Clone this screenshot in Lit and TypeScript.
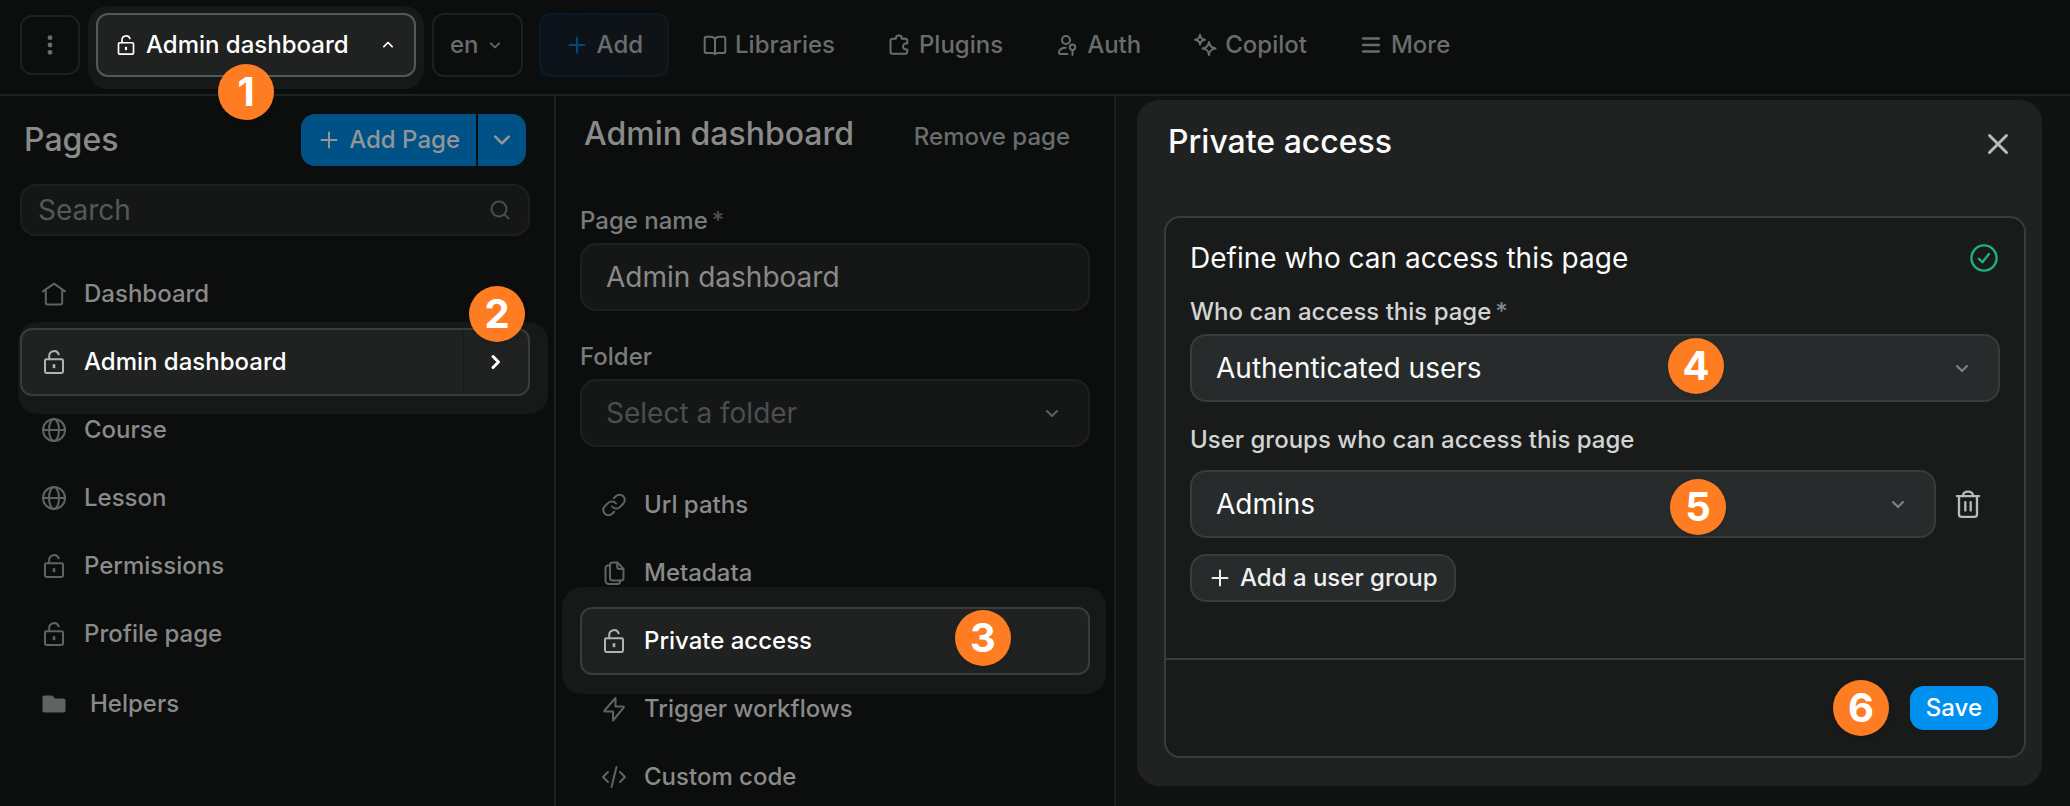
import { LitElement, html, css, svg, nothing, type TemplateResult } from "lit";
import { customElement, property, state } from "lit/decorators.js";
import { classMap } from "lit/directives/class-map.js";

const shapes: Record<string, TemplateResult> = {
  kebab: svg`<g fill="currentColor" stroke="none"><circle cx="12" cy="3.200" r="2.900"/><circle cx="12" cy="12" r="2.900"/><circle cx="12" cy="20.800" r="2.900"/></g>`,
  lock: svg`<rect x="3" y="9.3" width="18" height="13.7" rx="1.4"/><path d="M7.2 9.3V6a4.9 4.9 0 0 1 9.5-1.7"/><path d="M12 14.2v4" stroke-width="2.6" stroke-linecap="butt"/>`,
  house: svg`<path d="M1 9.4 12 1.6l11 7.8"/><path d="M3.8 8v12.4a2 2 0 0 0 2 2h12.4a2 2 0 0 0 2-2V8"/>`,
  globe: svg`<circle cx="12" cy="12" r="11"/><ellipse cx="12" cy="12" rx="5" ry="11"/><path d="M1 12h22"/>`,
  folder: svg`<path fill="currentColor" stroke="none" d="M.5 5.500a2 2 0 0 1 2-2h7a2 2 0 0 1 1.5.7L13 6.500h8.500a2 2 0 0 1 2 2v10a2 2 0 0 1-2 2h-19a2 2 0 0 1-2-2z"/>`,
  plus: svg`<path d="M12 4.500v15M4.500 12h15"/>`,
  down: svg`<path d="m7 10 5 5 5-5"/>`,
  up: svg`<path d="m7 14 5-5 5 5"/>`,
  downBig: svg`<path d="m4 8 8 8 8-8" stroke-width="3.200"/>`,
  right: svg`<path d="m9 6.500 5.500 5.500L9 17.500" stroke-width="3"/>`,
  search: svg`<circle cx="11" cy="11" r="7.500"/><path d="m16.500 16.500 4 4"/>`,
  book: svg`<path d="M12 5.500C10.800 4.300 9.500 3.700 8 3.700H3.500A1.800 1.800 0 0 0 1.700 5.500v12.700A1.800 1.800 0 0 0 3.500 20h5.700c1.200 0 2.100.5 2.800 1.300.7-.8 1.600-1.300 2.800-1.300h5.700a1.800 1.800 0 0 0 1.800-1.800V5.500a1.800 1.800 0 0 0-1.800-1.800H16c-1.500 0-2.800.6-4 1.800zM12 5.500v15.800"/>`,
  puzzle: svg`<path d="M5.500 5.700h3.300C8.800 3.800 10 2.500 11.800 2.500s3 1.300 3 3.200h3.500a2 2 0 0 1 2 2v2.700c-2.500-.3-4.300 1-4.300 3.100s1.800 3.300 4.300 3v2.300a2 2 0 0 1-2 2H5.500a2 2 0 0 1-2-2V7.700a2 2 0 0 1 2-2z"/>`,
  auth: svg`<circle cx="11" cy="7" r="4"/><path d="M12.500 21H5.300c-1 0-1.600-.8-1.400-1.800.6-2.700 3-4.400 6.800-4.400"/><circle cx="17.500" cy="14.300" r="2.700"/><path d="M17.500 17v5"/>`,
  sparkles: svg`<path d="M7 1.700c.4 3.400 1.700 4.700 5 5-3.300.3-4.600 1.600-5 5-.4-3.400-1.700-4.700-5-5 3.300-.3 4.600-1.600 5-5z"/><path d="M16 9c.6 4.200 2.200 5.900 6.500 6.500-4.300.6-5.900 2.200-6.500 6.500-.6-4.300-2.200-5.900-6.500-6.500C13.800 14.900 15.400 13.200 16 9z"/>`,
  menu: svg`<path d="M4 5.500h16M4 12h16M4 18.500h16" stroke-width="2.300"/>`,
  link: svg`<path d="M10 13.500a5.200 5.200 0 0 0 7.800.6l3.400-3.400a5.200 5.200 0 0 0-7.400-7.400l-2 2"/><path d="M14 10.500a5.200 5.200 0 0 0-7.800-.6l-3.400 3.400a5.200 5.200 0 0 0 7.400 7.400l2-2"/>`,
  docs: svg`<path d="M10.500 1.500h5L21.500 8v9a2.500 2.500 0 0 1-2.500 2.500h-8.500A2.500 2.500 0 0 1 8 17V4a2.500 2.500 0 0 1 2.500-2.500z"/><path d="M15.200 1.500V6a2 2 0 0 0 2 2h4"/><path d="M7.500 4.500H6A2.500 2.500 0 0 0 3.500 7v12.500A3.500 3.500 0 0 0 7 23h8.500a2.500 2.500 0 0 0 2.500-2.500v-1"/>`,
  bolt: svg`<path d="M13.500 1 2.500 13.500c-.3.400 0 1 .5 1h8L11 23.500 21.700 10.700c.4-.5.1-1.200-.5-1.200h-7.700z"/>`,
  code: svg`<path d="M6 7 1 12l5 5M18 7l5 5-5 5M14.500 2l-5 20"/>`,
  close: svg`<path d="m3.500 3.500 17 17M20.500 3.500l-17 17" stroke-width="3"/>`,
  check: svg`<circle cx="12" cy="12" r="10.800"/><path d="m7.600 12.600 3 3 5.600-7"/>`,
  trash: svg`<path d="M2.500 5.200h19M7.500 5c.4-2.300 2.200-3.600 4.500-3.600S16.100 2.700 16.500 5M4.300 5.500v15.200a2.300 2.300 0 0 0 2.300 2.300h10.800a2.300 2.300 0 0 0 2.300-2.300V5.500M9.700 10.500v7M14.300 10.500v7"/>`,
};

@customElement("ui-icon")
class UiIcon extends LitElement {
  static styles = css`
    :host { display: block; flex: none; width: 24px; height: 24px; }
    svg { display: block; width: 100%; height: 100%; overflow: visible; }
  `;
  @property() name = "";
  render() {
    return html`<svg viewBox="0 0 24 24" fill="none" stroke="currentColor" stroke-width="2"
      stroke-linecap="round" stroke-linejoin="round" aria-hidden="true">${shapes[this.name]}</svg>`;
  }
}

@customElement("step-badge")
class StepBadge extends LitElement {
  static styles = css`
    :host {
      position: absolute; z-index: 5; width: 56px; height: 56px; border-radius: 50%;
      display: grid; place-items: center; pointer-events: none;
      background: #ff7d22; color: #fff; font: 700 40px/56px Inter, sans-serif;
      box-shadow: 0 2px 4px rgba(0, 0, 0, 0.15);
    }
  `;
  @property({ type: Number }) step = 0;
  render() { return html`${this.step}`; }
}

interface Entry { icon: string; label: string; }

const tools: Entry[] = [
  { icon: "book", label: "Libraries" },
  { icon: "puzzle", label: "Plugins" },
  { icon: "auth", label: "Auth" },
  { icon: "sparkles", label: "Copilot" },
  { icon: "menu", label: "More" },
];
const pages: Entry[] = [
  { icon: "house", label: "Dashboard" },
  { icon: "lock", label: "Admin dashboard" },
  { icon: "globe", label: "Course" },
  { icon: "globe", label: "Lesson" },
  { icon: "lock", label: "Permissions" },
  { icon: "lock", label: "Profile page" },
];
const settings: Entry[] = [
  { icon: "link", label: "Url paths" },
  { icon: "docs", label: "Metadata" },
  { icon: "lock", label: "Private access" },
  { icon: "bolt", label: "Trigger workflows" },
  { icon: "code", label: "Custom code" },
];

@customElement("app-root")
class AppRoot extends LitElement {
  static styles = css`
    :host {
      display: flex; flex-direction: column; height: 100vh; overflow: hidden;
      background: #0c0e0d; color: #8a8a8a;
      font: 500 24px/32px Inter, sans-serif;
      --line: #1e2020;
    }
    * { box-sizing: border-box; }
    h1, h2, h3 { margin: 0; font-weight: 500; font-size: 32px; line-height: 40px; }
    button, input, select { font: inherit; color: inherit; margin: 0; outline: none; }
    button { display: flex; align-items: center; gap: 8px; padding: 0; border: 0; background: none; cursor: pointer; white-space: nowrap; }

    .topbar { position: relative; z-index: 2; display: flex; align-items: center; gap: 16px; padding: 13px 20px 17px; border-bottom: 2px solid var(--line); }
    .box { height: 64px; padding: 0 16px; border: 2px solid var(--line); border-radius: 12px; color: #6a6c6d; }
    .box.kebab { width: 60px; height: 60px; padding: 0; justify-content: center; }
    .box.lang { gap: 6px; }
    .current { position: relative; isolation: isolate; }
    .current::before { content: ""; position: absolute; z-index: -1; inset: -7px -8px -12px; border-radius: 20px; background: #171918; }
    .box.picker { width: 320px; gap: 10px; padding-left: 18px; border-color: #4f5a5b; background: #202221; color: #fff; }
    .picker .label { flex: 1; text-align: left; }
    .current step-badge { left: 122px; top: 51px; }
    .trail { display: flex; gap: 8px; }
    .toolset { display: flex; }
    .box.add { padding: 0 24px; border-color: #0a1a26; background: linear-gradient(100deg, #0b131b, #101315); }
    .add ui-icon { color: #00477a; }
    .box.tool { padding: 0 24px; border-color: transparent; }
    .small { width: 20px; height: 20px; }

    .columns { flex: 1; min-height: 0; display: grid; grid-template-columns: 556px 560px minmax(0, 1fr); }
    .pages, .settings { min-height: 0; border-right: 2px solid var(--line); }
    .pages { padding: 18px 24px 0 20px; }
    .head { display: flex; align-items: center; justify-content: space-between; }
    .pages .head { padding: 0 4px; margin-bottom: 18px; }
    .split { display: flex; gap: 2px; color: #939597; }
    .split button { height: 52px; padding: 0 16px; background: #005185; }
    .split button:first-child { border-radius: 14px 0 0 14px; }
    .split button:last-child { width: 48px; padding: 0; justify-content: center; border-radius: 0 14px 14px 0; }

    .field { display: flex; align-items: center; border: 2px solid var(--line); border-radius: 16px; background: #151716; font-weight: 400; font-size: 28px; line-height: 36px; }
    .field input, .field select { flex: 1; min-width: 0; width: 100%; padding: 0; border: 0; background: none; appearance: none; }
    .field ui-icon { color: #7f8486; }
    .muted select { color: #4b4e50; }
    .muted ui-icon { color: #5e6162; }
    .search { height: 52px; padding: 0 16px; }
    .search ui-icon { color: #4b4e4f; }
    ::placeholder { color: #55585a; opacity: 1; }

    .rows { list-style: none; margin: 24px 0 0; padding: 0; }
    .row { position: relative; isolation: isolate; display: flex; height: 68px; border: 2px solid transparent; }
    .row .go { flex: 1; gap: 18px; padding: 0 20px; color: inherit; }
    .row .go ui-icon { color: #606364; }
    .row.folder { height: 72px; }
    .row.folder .go { gap: 24px; }
    .row.active { z-index: 1; color: #fff; }
    .row.active .go ui-icon { color: #aeb4b6; }
    .row.active::before { content: ""; position: absolute; z-index: -2; border-radius: 20px; background: #171918; }
    .row.active::after { content: ""; position: absolute; z-index: -1; inset: -2px; border: 2px solid #3a3c3c; border-radius: 12px; background: #202221; }
    .pages .row.active::before { inset: -8px -20px -20px -4px; }
    .settings .row.active::before { inset: -22px -18px -21px -20px; }
    .more { width: 65px; justify-content: center; border-left: 1px solid #191b1b; }
    .pages step-badge { left: 447px; top: -44px; }
    .settings step-badge { left: 373px; top: 1px; }

    .settings { padding: 18px 24px 0; }
    .settings .head { align-items: baseline; padding: 0 20px 0 4px; margin-bottom: 51px; }
    .settings .head button { color: #6a6c6d; }
    label { display: block; line-height: 32px; }
    .settings label { margin-bottom: 6px; color: #7a7c7c; }
    sup { font-size: 24px; line-height: 1; vertical-align: baseline; color: #4b5052; margin-left: 4px; }
    .tall { height: 68px; padding: 0 24px; }
    .settings .tall + label { margin-top: 30px; }

    .stage { display: flex; padding: 4px 28px 20px 21px; background: #111312; }
    .panel { flex: 1; display: flex; flex-direction: column; padding: 22px 16px 28px 27px; border-radius: 22px; background: #202221; color: #fafafa; }
    .panel > .head { padding: 0 16px 0 4px; margin-bottom: 54px; }
    .panel > .head .close { padding-top: 4px; color: #b5bbbe; }
    .card { flex: 1; display: flex; flex-direction: column; border: 2px solid #3a3c3c; border-radius: 16px; background: #191b1a; }
    .body { flex: 1; padding: 20px 24px; }
    .card .head { margin-bottom: 18px; }
    .card h3 { font-weight: 400; font-size: 28px; }
    .done { width: 28px; height: 28px; margin-right: 2px; color: #1bb37f; }
    .card label { margin-bottom: 6px; color: #d2d4d4; }
    .card sup { color: #7f888b; }
    .card .field { position: relative; border-color: #3a3c3c; background: #272b2c; }
    .card .field + label { margin-top: 22px; margin-bottom: 14px; }
    .group { display: flex; align-items: center; gap: 18px; margin-bottom: 16px; }
    .group .field { flex: 1; }
    .group button { width: 46px; color: #b5bbbe; }
    .group button ui-icon { width: 28px; height: 28px; }
    .addgroup { height: 48px; padding: 0 16px; border: 2px solid #3a3c3c; border-radius: 16px; background: #272b2c; color: #eeefee; }
    .foot { position: relative; display: flex; justify-content: flex-end; align-items: center; height: 98px; padding: 0 26px; border-top: 2px solid #3a3c3c; }
    .save { height: 44px; padding: 0 16px; border-radius: 14px; background: #0090ef; color: #fff; }
    .foot step-badge { right: 135px; top: 20px; }
    .who step-badge { right: 274px; top: 2px; }
    .whom step-badge { right: 208px; top: 7px; }
  `;

  @state() private page = "Admin dashboard";
  @state() private section = "Private access";

  private pageRow(e: Entry) {
    const active = e.label === this.page;
    return html`<li class=${classMap({ row: true, active })}>
      <button class="go" @click=${() => (this.page = e.label)}><ui-icon name=${e.icon}></ui-icon>${e.label}</button>
      ${active ? html`<button class="more" aria-label="Open page settings"><ui-icon name="right"></ui-icon></button><step-badge step="2"></step-badge>` : nothing}
    </li>`;
  }

  private settingRow(e: Entry) {
    const active = e.label === this.section;
    return html`<li class=${classMap({ row: true, active })}>
      <button class="go" @click=${() => (this.section = e.label)}><ui-icon name=${e.icon}></ui-icon>${e.label}</button>
      ${active ? html`<step-badge step="3"></step-badge>` : nothing}
    </li>`;
  }

  render() {
    return html`
      <header class="topbar">
        <button class="box kebab" aria-label="Menu"><ui-icon class="small" name="kebab"></ui-icon></button>
        <div class="current">
          <button class="box picker"><ui-icon class="small" name="lock"></ui-icon><span class="label">Admin dashboard</span><ui-icon class="small" name="up"></ui-icon></button>
          <step-badge step="1"></step-badge>
        </div>
        <button class="box lang">en<ui-icon class="small" name="down"></ui-icon></button>
        <nav class="trail">
          <button class="box add"><ui-icon name="plus"></ui-icon>Add</button>
          <div class="toolset">
            ${tools.map((t) => html`<button class="box tool"><ui-icon name=${t.icon}></ui-icon>${t.label}</button>`)}
          </div>
        </nav>
      </header>
      <div class="columns">
        <aside class="pages">
          <div class="head">
            <h1>Pages</h1>
            <div class="split">
              <button><ui-icon name="plus"></ui-icon>Add Page</button>
              <button aria-label="More add options"><ui-icon class="small" name="downBig"></ui-icon></button>
            </div>
          </div>
          <div class="field search"><input type="search" aria-label="Search" placeholder="Search" /><ui-icon name="search"></ui-icon></div>
          <ul class="rows">
            ${pages.map((p) => this.pageRow(p))}
            <li class="row folder"><button class="go"><ui-icon name="folder"></ui-icon>Helpers</button></li>
          </ul>
        </aside>
        <section class="settings">
          <div class="head"><h2>Admin dashboard</h2><button>Remove page</button></div>
          <label for="name">Page name<sup>*</sup></label>
          <div class="field tall"><input id="name" type="text" value="Admin dashboard" /></div>
          <label for="folder">Folder</label>
          <div class="field tall muted"><select id="folder"><option>Select a folder</option></select><ui-icon name="down"></ui-icon></div>
          <ul class="rows">${settings.map((s) => this.settingRow(s))}</ul>
        </section>
        <main class="stage">
          <section class="panel">
            <div class="head"><h2>Private access</h2><button class="close" aria-label="Close"><ui-icon name="close"></ui-icon></button></div>
            <div class="card">
              <div class="body">
                <div class="head"><h3>Define who can access this page</h3><ui-icon class="done" name="check"></ui-icon></div>
                <label for="who">Who can access this page<sup>*</sup></label>
                <div class="field tall who"><select id="who"><option>Authenticated users</option></select><ui-icon name="down"></ui-icon><step-badge step="4"></step-badge></div>
                <label for="groups">User groups who can access this page</label>
                <div class="group">
                  <div class="field tall whom"><select id="groups"><option>Admins</option></select><ui-icon name="down"></ui-icon><step-badge step="5"></step-badge></div>
                  <button aria-label="Remove user group"><ui-icon name="trash"></ui-icon></button>
                </div>
                <button class="addgroup"><ui-icon name="plus"></ui-icon>Add a user group</button>
              </div>
              <div class="foot"><step-badge step="6"></step-badge><button class="save">Save</button></div>
            </div>
          </section>
        </main>
      </div>
    `;
  }
}
